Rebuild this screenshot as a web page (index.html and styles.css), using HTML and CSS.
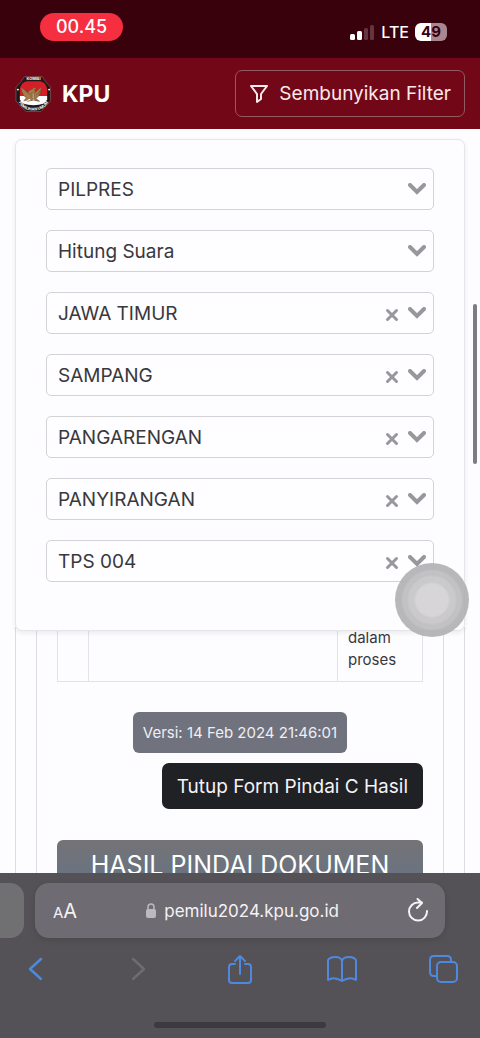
FILE: index.html
```
<!DOCTYPE html>
<html lang="id">
<head>
  <meta charset="UTF-8">
  <meta name="viewport" content="width=device-width, initial-scale=1.0">
  <title>KPU - Hitung Suara</title>
  <link rel="stylesheet" href="styles.css">
</head>
<body>
  <div class="status-bar">
    <span class="clock">00.45</span>
    <div class="status-icons">
      <svg width="25" height="16" viewBox="0 0 25 16" aria-hidden="true">
        <rect x="0" y="10" width="5" height="6" rx="1.5" fill="#fff"/>
        <rect x="7" y="7" width="5" height="9" rx="1.5" fill="#fff"/>
        <rect x="14" y="4" width="4" height="12" rx="1.5" fill="#653441"/>
        <rect x="20" y="1" width="4" height="15" rx="1.5" fill="#653441"/>
      </svg>
      <span class="network">LTE</span>
      <span class="battery">49</span>
    </div>
  </div>

  <header class="navbar">
    <a href="#" class="brand">
      <svg class="logo" viewBox="0 0 76 76" aria-hidden="true">
        <path d="M20 2h36l7 11 10 11v28L63 64 53 74H23L12 64 2 52V24l10-11z" fill="#201719" stroke="#a77773" stroke-width="1"/>
        <path d="M10 42V28q3-15 15-16h26q12 1 15 16v14z" fill="#d51f28"/>
        <path d="M10 42h56v7q-3 12-28 12T10 49z" fill="#fff"/>
        <path d="M37 27q1-4 5-2l2 3-4 1 2 5 4-3 8-8-1 10-4 9-6 5 6 5-7-1-4-4-4 4-5-4-5 4-6 1 5-6-5-5-4-8-2-10 9 8 5 4 3-4z" fill="#a67c48" stroke="#664426"/>
        <path d="M33 36h10v8l-5 5-5-5z" fill="#c6a065" stroke="#63422a"/>
        <path d="M35 37v8m5-8v8m-17-15 7 9m23-9-7 9M25 53q13-5 26 0" fill="none" stroke="#6d4b31" stroke-width="1.5"/>
        <circle cx="6" cy="29" r="2" fill="#fff"/>
        <circle cx="70" cy="29" r="2" fill="#fff"/>
        <path id="logo-top" d="M18 10h40" fill="none"/>
        <path id="logo-bottom" d="M4 46Q12 72 38 72T72 46" fill="none"/>
        <text class="logo-text"><textPath href="#logo-top" startOffset="50%">KOMISI</textPath></text>
        <text class="logo-text"><textPath href="#logo-bottom" startOffset="50%">PEMILIHAN UMUM</textPath></text>
      </svg>
      <span>KPU</span>
    </a>
    <button type="button" class="filter-button">
      <svg width="20" height="20" viewBox="0 0 20 20" aria-hidden="true">
        <path d="M2 2h16l-6 8v5l-4 3v-8z" fill="none" stroke="currentColor" stroke-width="2" stroke-linejoin="round"/>
      </svg>
      Sembunyikan Filter
    </button>
  </header>

  <!-- Chevron and clear icons shared by the filter fields -->
  <svg class="sprite" aria-hidden="true">
    <symbol id="chevron" viewBox="0 0 18 12"><path d="M2 2l7 7 7-7" fill="none" stroke="#98979b" stroke-width="4" stroke-linecap="round" stroke-linejoin="miter"/></symbol>
    <symbol id="clear" viewBox="0 0 14 14"><path d="M2.500 2.500l9 9m0-9l-9 9" fill="none" stroke="#98979b" stroke-width="3" stroke-linecap="round"/></symbol>
  </svg>

  <main class="content">
    <form class="filter-card">
      <div class="field">
        <select aria-label="Jenis pemilihan"><option>PILPRES</option></select>
        <div class="field-icons"><svg class="chevron"><use href="#chevron"/></svg></div>
      </div>
      <div class="field">
        <select aria-label="Tahapan"><option>Hitung Suara</option></select>
        <div class="field-icons"><svg class="chevron"><use href="#chevron"/></svg></div>
      </div>
      <div class="field">
        <select aria-label="Provinsi"><option>JAWA TIMUR</option></select>
        <div class="field-icons">
          <button type="button" class="clear" aria-label="Hapus provinsi"><svg><use href="#clear"/></svg></button>
          <svg class="chevron"><use href="#chevron"/></svg>
        </div>
      </div>
      <div class="field">
        <select aria-label="Kabupaten"><option>SAMPANG</option></select>
        <div class="field-icons">
          <button type="button" class="clear" aria-label="Hapus kabupaten"><svg><use href="#clear"/></svg></button>
          <svg class="chevron"><use href="#chevron"/></svg>
        </div>
      </div>
      <div class="field">
        <select aria-label="Kecamatan"><option>PANGARENGAN</option></select>
        <div class="field-icons">
          <button type="button" class="clear" aria-label="Hapus kecamatan"><svg><use href="#clear"/></svg></button>
          <svg class="chevron"><use href="#chevron"/></svg>
        </div>
      </div>
      <div class="field">
        <select aria-label="Kelurahan"><option>PANYIRANGAN</option></select>
        <div class="field-icons">
          <button type="button" class="clear" aria-label="Hapus kelurahan"><svg><use href="#clear"/></svg></button>
          <svg class="chevron"><use href="#chevron"/></svg>
        </div>
      </div>
      <div class="field">
        <select aria-label="TPS"><option>TPS 004</option></select>
        <div class="field-icons">
          <button type="button" class="clear" aria-label="Hapus TPS"><svg><use href="#clear"/></svg></button>
          <svg class="chevron"><use href="#chevron"/></svg>
        </div>
      </div>
    </form>

    <div class="results">
      <div class="results-inner">
        <table class="result-table">
          <tbody>
            <tr>
              <td class="col-number"></td>
              <td></td>
              <td class="col-status">dalam proses</td>
            </tr>
          </tbody>
        </table>
        <span class="version">Versi: 14 Feb 2024 21:46:01</span>
        <button type="button" class="close-form">Tutup Form Pindai C Hasil</button>
        <h2 class="scan-title">HASIL PINDAI DOKUMEN</h2>
      </div>
    </div>
  </main>

  <div class="scroll-thumb"></div>
  <div class="assistive-touch"></div>

  <footer class="browser-bar">
    <div class="tabs">
      <div class="previous-tab"></div>
      <div class="address-bar">
        <button type="button" class="text-size" aria-label="Ukuran teks"><span>A</span>A</button>
        <a href="#" class="address">
          <svg width="12" height="16" viewBox="0 0 12 16" aria-hidden="true">
            <path d="M3 7V4q0-3 3-3t3 3v3" fill="none" stroke="#bcbabf" stroke-width="1.5"/>
            <rect x="1" y="6" width="10" height="9" rx="2" fill="#bcbabf"/>
          </svg>
          pemilu2024.kpu.go.id
        </a>
        <button type="button" aria-label="Muat ulang">
          <svg width="22" height="26" viewBox="0 0 22 26" aria-hidden="true">
            <path d="M20 13a9 9 0 1 1-9-8.500h4M10.500 1l4.500 4-5 5" fill="none" stroke="#f4f2f5" stroke-width="2" stroke-linecap="round" stroke-linejoin="round"/>
          </svg>
        </button>
      </div>
    </div>
    <nav class="toolbar">
      <button type="button" aria-label="Kembali">
        <svg width="30" height="32" viewBox="0 0 30 32"><path d="M20 6L9 16l11 10" stroke-width="2.5"/></svg>
      </button>
      <button type="button" aria-label="Maju" disabled>
        <svg width="30" height="32" viewBox="0 0 30 32"><path d="M10 6l11 10-11 10" stroke-width="2.5"/></svg>
      </button>
      <button type="button" aria-label="Bagikan">
        <svg width="30" height="32" viewBox="0 0 30 32"><path d="M10 11H7q-3 0-3 3v13q0 3 3 3h16q3 0 3-3V14q0-3-3-3h-3M15 21V3M10 8l5-5 5 5"/></svg>
      </button>
      <button type="button" aria-label="Bookmark">
        <svg width="30" height="32" viewBox="0 0 30 32"><path d="M15 28V8q-1-4-7-4-5 0-7 3v20q6-4 14 1 8-5 14-1V7q-2-3-7-3-6 0-7 4"/></svg>
      </button>
      <button type="button" aria-label="Tab">
        <svg width="30" height="32" viewBox="0 0 30 32"><path d="M8 23H5q-4 0-4-4V7q0-4 4-4h13q4 0 4 4v2"/><rect x="8" y="9" width="20" height="20" rx="4"/></svg>
      </button>
    </nav>
    <div class="home-indicator"></div>
  </footer>
</body>
</html>
```
FILE: styles.css
```
* {
  box-sizing: border-box;
}

body {
  margin: 0;
  height: 100vh;
  display: flex;
  flex-direction: column;
  overflow: hidden;
  position: relative;
  background: #fdfcfe;
  color: #39383c;
  font-family: Inter, "Liberation Sans", sans-serif;
}

button {
  padding: 0;
  border: none;
  background: none;
  font-family: inherit;
  cursor: pointer;
}

a {
  color: inherit;
  text-decoration: none;
}

svg {
  display: block;
}

.sprite {
  position: absolute;
  width: 0;
  height: 0;
}

/* Status bar */
.status-bar {
  flex: none;
  display: flex;
  justify-content: space-between;
  align-items: center;
  height: 58px;
  padding: 0 33px 4px 40px;
  background: #38010c;
  color: #fff;
}

.clock {
  padding: 0 16px;
  border-radius: 14px;
  background: #f52e40;
  font-size: 18px;
  font-weight: 500;
  line-height: 28px;
}

.status-icons {
  display: flex;
  align-items: center;
  gap: 6px;
  padding-top: 10px;
}

.network {
  font-size: 16px;
  font-weight: 500;
  line-height: 18px;
}

.battery {
  width: 32px;
  border-radius: 6px;
  background: linear-gradient(to right, #fff 50%, #aa8790 50%);
  color: #38010c;
  font-size: 15px;
  font-weight: 700;
  line-height: 18px;
  text-align: center;
}

/* Navbar */
.navbar {
  flex: none;
  display: flex;
  justify-content: space-between;
  align-items: center;
  height: 71px;
  padding: 0 15px;
  background: #720817;
  color: #fff;
}

.brand {
  display: flex;
  align-items: center;
  gap: 10px;
  font-size: 23px;
  font-weight: 700;
}

.logo {
  width: 37px;
  height: 38px;
}

.logo-text {
  fill: #fff;
  font-size: 8px;
  font-weight: 700;
  text-anchor: middle;
}

.filter-button {
  display: flex;
  align-items: center;
  gap: 10px;
  height: 47px;
  padding: 0 13px;
  border: 1px solid #945a62;
  border-radius: 7px;
  color: #fbe9ea;
  font-size: 19px;
}

/* Filter */
.content {
  flex: 1;
  min-height: 0;
  overflow: hidden;
  padding: 10px 15px 0;
}

.filter-card {
  position: relative;
  z-index: 1;
  display: flex;
  flex-direction: column;
  gap: 20px;
  padding: 28px 30px 48px;
  border: 1px solid #e6e5e9;
  border-radius: 7px;
  background: #fdfcfe;
  box-shadow: 0 2px 5px rgba(0, 0, 0, 0.08);
}

.field {
  display: grid;
  align-items: center;
}

.field select,
.field-icons {
  grid-area: 1 / 1;
}

.field select {
  appearance: none;
  width: 100%;
  height: 42px;
  padding: 0 60px 0 11px;
  border: 1px solid #d3d2d7;
  border-radius: 5px;
  background: #fefdff;
  color: #39383c;
  font-family: inherit;
  font-size: 19px;
}

.field-icons {
  justify-self: end;
  display: flex;
  align-items: center;
  gap: 9px;
  padding-right: 8px;
  pointer-events: none;
}

.chevron {
  width: 18px;
  height: 12px;
}

.clear {
  padding-top: 4px;
  pointer-events: auto;
}

.clear svg {
  width: 14px;
  height: 14px;
}

/* Results, tucked slightly under the filter card */
.results {
  margin-top: -4px;
  padding: 0 20px;
  border: solid #dddce1;
  border-width: 0 1px;
}

.results-inner {
  display: flex;
  flex-direction: column;
  align-items: center;
  padding: 0 20px;
  border: solid #dddce1;
  border-width: 0 1px;
}

.result-table {
  width: 100%;
  border-collapse: collapse;
  table-layout: fixed;
}

.result-table td {
  padding: 0 10px 10px;
  border: 1px solid #e3e2e6;
  border-top: none;
  font-size: 15px;
  line-height: 22px;
}

.result-table .col-number {
  width: 31px;
}

.result-table .col-status {
  width: 85px;
}

.version {
  margin-top: 30px;
  padding: 0 10px;
  border-radius: 6px;
  background: #70727d;
  color: #eeeef3;
  font-size: 15px;
  line-height: 41px;
}

.close-form {
  align-self: flex-end;
  height: 46px;
  margin-top: 10px;
  padding: 0 15px;
  border-radius: 7px;
  background: #202125;
  color: #f4f3f7;
  font-size: 19px;
}

.scan-title {
  align-self: stretch;
  margin: 31px 0 0;
  border-radius: 6px 6px 0 0;
  background: linear-gradient(#747375, #6b7380 32px);
  color: #fff;
  font-size: 25px;
  font-weight: 400;
  line-height: 50px;
  text-align: center;
  white-space: nowrap;
}

/* Overlays */
.scroll-thumb {
  position: absolute;
  top: 304px;
  right: 3px;
  width: 4px;
  height: 160px;
  border-radius: 2px;
  background: #7d7c80;
}

.assistive-touch {
  position: absolute;
  z-index: 2;
  top: 563px;
  right: 11px;
  width: 74px;
  height: 74px;
  border-radius: 50%;
  background: radial-gradient(circle, #d7d5d8 0 16px, rgba(200, 199, 202, 0.96) 18px 23px, rgba(190, 189, 192, 0.94) 25px 29px, rgba(176, 175, 178, 0.9) 31px);
}

/* Browser bar */
.browser-bar {
  flex: none;
  display: flex;
  flex-direction: column;
  align-items: center;
  padding: 10px 0;
  background: #545256;
}

.tabs {
  align-self: stretch;
  display: flex;
  gap: 11px;
  padding-right: 35px;
}

.previous-tab {
  width: 24px;
  border-radius: 0 14px 14px 0;
  background: #707072;
}

.address-bar {
  flex: 1;
  display: flex;
  justify-content: space-between;
  align-items: center;
  height: 55px;
  padding: 0 16px 0 18px;
  border-radius: 14px;
  background: #6e6b72;
  box-shadow: 0 2px 6px rgba(0, 0, 0, 0.12);
  color: #f4f2f5;
}

.text-size {
  color: inherit;
  font-size: 20px;
}

.text-size span {
  font-size: 15px;
}

.address {
  display: flex;
  align-items: center;
  gap: 7px;
  font-size: 17px;
}

.toolbar {
  align-self: stretch;
  display: flex;
  justify-content: space-between;
  padding: 15px 21px 0;
}

.toolbar svg {
  fill: none;
  stroke: #4f88df;
  stroke-width: 2;
  stroke-linecap: round;
  stroke-linejoin: round;
}

.toolbar button:disabled svg {
  stroke: #6e6c71;
}

.home-indicator {
  width: 172px;
  height: 6px;
  margin-top: 37px;
  border-radius: 3px;
  background: #3c3a3f;
}
```
